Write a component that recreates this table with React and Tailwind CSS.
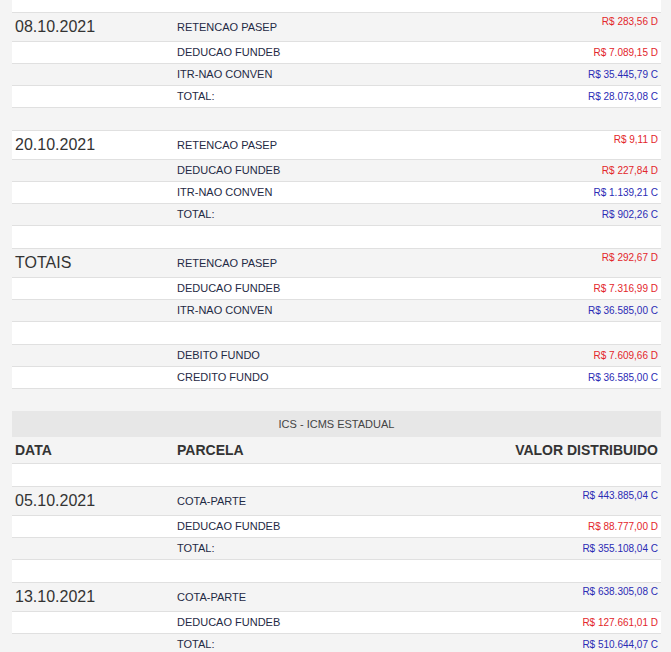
import React from 'react';

const RED = 'text-[#e3262b]';
const BLUE = 'text-[#2b2bb5]';

const pasep = [
  { date: '08.10.2021', items: [
    ['RETENCAO PASEP', 'R$ 283,56 D'],
    ['DEDUCAO FUNDEB', 'R$ 7.089,15 D'],
    ['ITR-NAO CONVEN', 'R$ 35.445,79 C'],
    ['TOTAL:', 'R$ 28.073,08 C'],
  ] },
  { date: '20.10.2021', items: [
    ['RETENCAO PASEP', 'R$ 9,11 D'],
    ['DEDUCAO FUNDEB', 'R$ 227,84 D'],
    ['ITR-NAO CONVEN', 'R$ 1.139,21 C'],
    ['TOTAL:', 'R$ 902,26 C'],
  ] },
];

const totais = [
  ['RETENCAO PASEP', 'R$ 292,67 D'],
  ['DEDUCAO FUNDEB', 'R$ 7.316,99 D'],
  ['ITR-NAO CONVEN', 'R$ 36.585,00 C'],
];

const fundo = [
  ['DEBITO FUNDO', 'R$ 7.609,66 D'],
  ['CREDITO FUNDO', 'R$ 36.585,00 C'],
];

const icms = [
  { date: '05.10.2021', items: [
    ['COTA-PARTE', 'R$ 443.885,04 C'],
    ['DEDUCAO FUNDEB', 'R$ 88.777,00 D'],
    ['TOTAL:', 'R$ 355.108,04 C'],
  ] },
  { date: '13.10.2021', items: [
    ['COTA-PARTE', 'R$ 638.305,08 C'],
    ['DEDUCAO FUNDEB', 'R$ 127.661,01 D'],
    ['TOTAL:', 'R$ 510.644,07 C'],
  ] },
];

function Row({ date, label, value, tall, white }) {
  const color = value && value.endsWith('D') ? RED : BLUE;
  return (
    <div className={`flex border-t border-[#e0e0e0] ${tall ? 'h-[29px]' : 'h-[22px]'} ${white ? 'bg-white' : ''}`}>
      <div className="w-[162px] pl-[3px] flex items-center text-[16px] text-[#333]">{date}</div>
      <div className="flex-1 pl-[3px] flex items-center text-[11px] text-[#1f2a44]">{label}</div>
      <div className={`pr-[3px] flex text-[10px] leading-[14px] ${color} ${tall ? 'items-start pt-[2px]' : 'items-center'}`}>{value}</div>
    </div>
  );
}

function Empty({ white }) {
  return <div className={`h-[23px] border-t border-[#e0e0e0] ${white ? 'bg-white' : ''}`} />;
}

function Group({ date, items, startWhite }) {
  return items.map(([label, value], i) => (
    <Row key={label + i} date={i === 0 ? date : ''} label={label} value={value} tall={i === 0}
      white={(i % 2 === 0) === startWhite} />
  ));
}

export default function App() {
  return (
    <div className="min-h-screen bg-[#f4f4f4] pl-[12px] pr-[10px]" style={{ fontFamily: '"Liberation Sans", Arial, sans-serif' }}>
      <div className="border-b border-[#e0e0e0]">
        <div className="h-[12px] bg-white" />
        <Group date={pasep[0].date} items={pasep[0].items} startWhite={false} />
        <Empty />
        <Group date={pasep[1].date} items={pasep[1].items} startWhite={true} />
        <Empty white />
        <Group date="TOTAIS" items={totais} startWhite={false} />
        <Empty white />
        <Row label={fundo[0][0]} value={fundo[0][1]} />
        <Row label={fundo[1][0]} value={fundo[1][1]} white />
      </div>

      <div className="mt-[22px]">
        <div className="h-[26px] bg-[#e7e7e7] flex items-center justify-center text-[11px] text-[#444]">
          ICS - ICMS ESTADUAL
        </div>
        <div className="h-[26px] flex items-center font-bold text-[14px] text-[#333]">
          <div className="w-[162px] pl-[3px]">DATA</div>
          <div className="flex-1 pl-[3px]">PARCELA</div>
          <div className="pr-[3px]">VALOR DISTRIBUIDO</div>
        </div>
        <Empty white />
        <Group date={icms[0].date} items={icms[0].items} startWhite={false} />
        <Empty white />
        <Group date={icms[1].date} items={icms[1].items} startWhite={false} />
        <div className="border-t border-[#e0e0e0] h-[22px] bg-white" />
      </div>
    </div>
  );
}
